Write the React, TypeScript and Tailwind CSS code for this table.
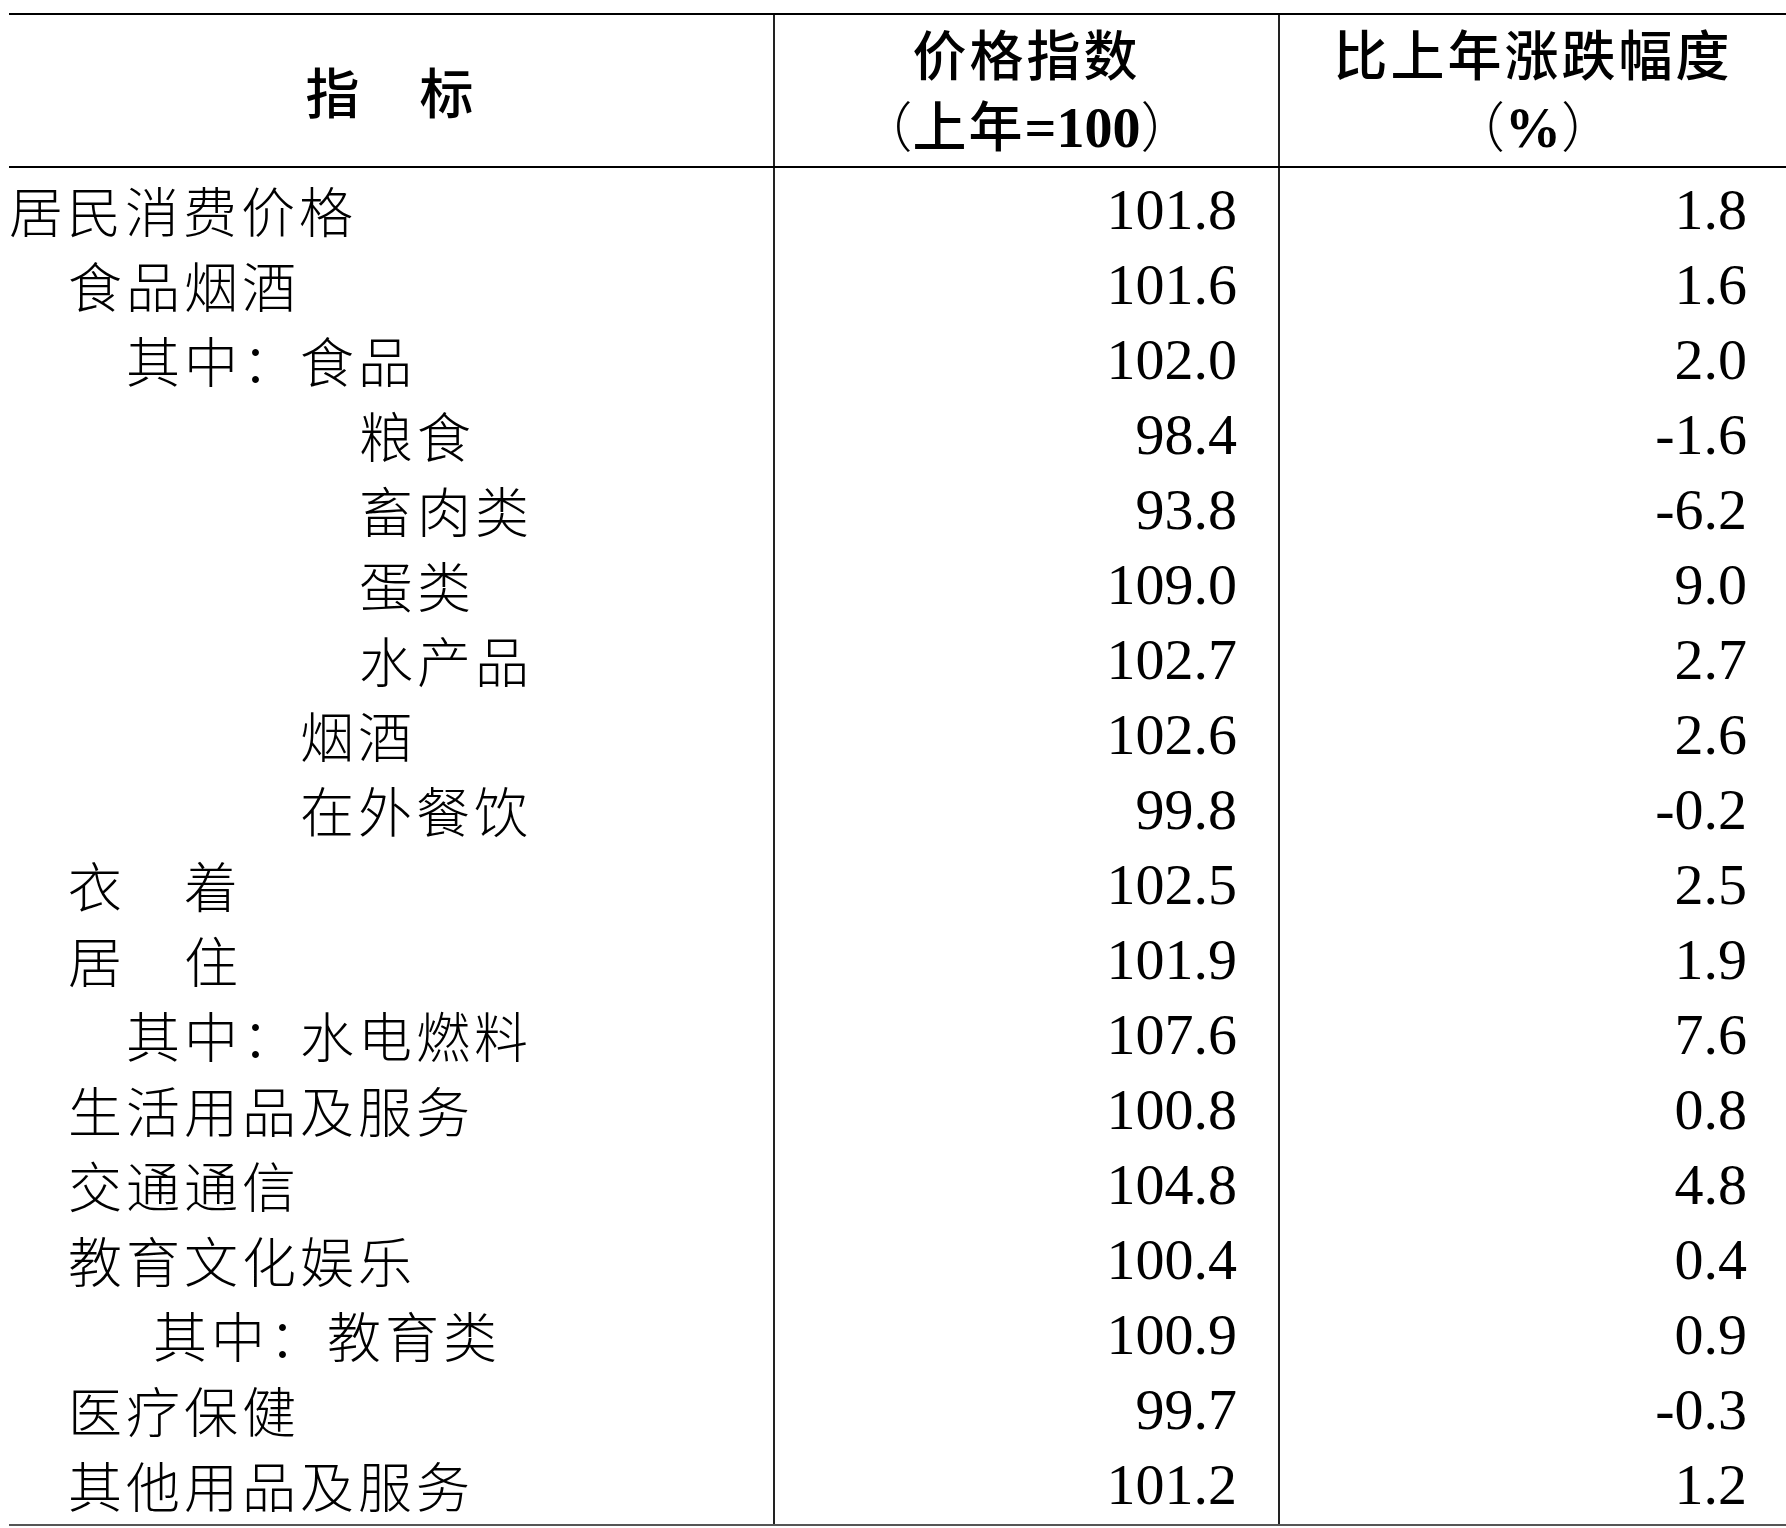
import React from 'react';

type Row = { label: string; indent: number; index: string; change: string };

const rows: Row[] = [
  { label: '居民消费价格', indent: 0, index: '101.8', change: '1.8' },
  { label: '食品烟酒', indent: 59, index: '101.6', change: '1.6' },
  { label: '其中：食品', indent: 117, index: '102.0', change: '2.0' },
  { label: '粮食', indent: 350, index: '98.4', change: '-1.6' },
  { label: '畜肉类', indent: 350, index: '93.8', change: '-6.2' },
  { label: '蛋类', indent: 350, index: '109.0', change: '9.0' },
  { label: '水产品', indent: 350, index: '102.7', change: '2.7' },
  { label: '烟酒', indent: 291, index: '102.6', change: '2.6' },
  { label: '在外餐饮', indent: 291, index: '99.8', change: '-0.2' },
  { label: '衣　着', indent: 59, index: '102.5', change: '2.5' },
  { label: '居　住', indent: 59, index: '101.9', change: '1.9' },
  { label: '其中：水电燃料', indent: 117, index: '107.6', change: '7.6' },
  { label: '生活用品及服务', indent: 59, index: '100.8', change: '0.8' },
  { label: '交通通信', indent: 59, index: '104.8', change: '4.8' },
  { label: '教育文化娱乐', indent: 59, index: '100.4', change: '0.4' },
  { label: '其中：教育类', indent: 144, index: '100.9', change: '0.9' },
  { label: '医疗保健', indent: 59, index: '99.7', change: '-0.3' },
  { label: '其他用品及服务', indent: 59, index: '101.2', change: '1.2' },
];

const cjk = "font-['Noto_Sans_CJK_SC',sans-serif]";
const serif = "font-['Liberation_Serif',serif]";

export default function App() {
  return (
    <div className="min-h-screen bg-white pl-[9px] pt-[13px] text-black">
      <div className="w-[1777px]">
        {/* header */}
        <div className="grid h-[155px] grid-cols-[764px_505px_508px] border-y-2 border-black">
          <div className={`flex items-center justify-center text-[54px] font-medium leading-[71px] tracking-[3px] ${cjk}`}>
            指　标
          </div>
          <div className="flex flex-col items-center justify-center border-l-2 border-[#222] text-[54px] leading-[71px]">
            <span className={`font-medium tracking-[3px] ${cjk}`}>价格指数</span>
            <span className="whitespace-nowrap">
              <span className={`font-light ${cjk}`}>（</span>
              <span className={`font-medium tracking-[2px] ${cjk}`}>上年</span>
              <span className={`text-[56px] font-bold ${serif}`}>=100</span>
              <span className={`font-light ${cjk}`}>）</span>
            </span>
          </div>
          <div className="flex flex-col items-center justify-center border-l-2 border-[#222] text-[54px] leading-[71px]">
            <span className={`font-medium tracking-[3px] ${cjk}`}>比上年涨跌幅度</span>
            <span className="whitespace-nowrap">
              <span className={`font-light ${cjk}`}>（</span>
              <span className={`text-[56px] font-bold ${serif}`}>%</span>
              <span className={`font-light ${cjk}`}>）</span>
            </span>
          </div>
        </div>

        {/* body */}
        <div className="border-b-2 border-[#555]">
          {rows.map((r, i) => {
            const h =
              i === 0 ? 'h-[79px] pt-[4px]' : i === rows.length - 1 ? 'h-[77px] pb-[2px]' : 'h-[75px]';
            return (
              <div key={i} className="grid grid-cols-[764px_505px_508px]">
                <div
                  className={`flex items-center whitespace-pre text-[54px] font-light leading-[75px] tracking-[4px] ${h} ${cjk}`}
                  style={{ paddingLeft: r.indent }}
                >
                  {r.label}
                </div>
                <div className={`flex items-center justify-end border-l-2 border-[#222] pr-[41px] text-[58px] leading-[75px] ${h} ${serif}`}>
                  {r.index}
                </div>
                <div className={`flex items-center justify-end border-l-2 border-[#222] pr-[39px] text-[58px] leading-[75px] ${h} ${serif}`}>
                  {r.change}
                </div>
              </div>
            );
          })}
        </div>
      </div>
    </div>
  );
}
